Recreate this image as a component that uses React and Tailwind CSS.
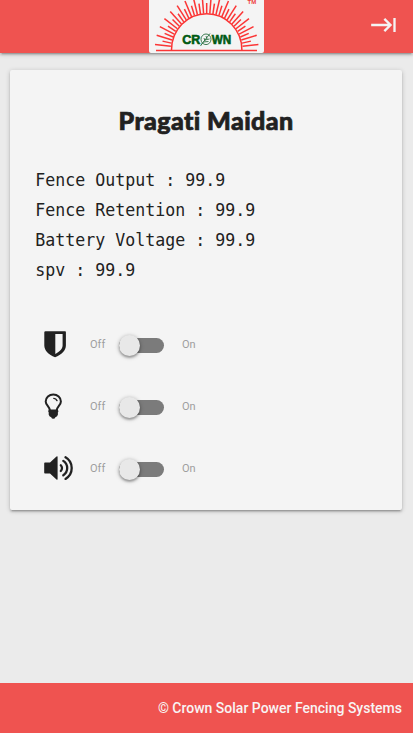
import { MdKeyboardTab } from "react-icons/md";

const readings = [
  ["Fence Output", "99.9"],
  ["Fence Retention", "99.9"],
  ["Battery Voltage", "99.9"],
  ["spv", "99.9"],
];

const rays = Array.from({ length: 35 }, (_, i) => {
  const angle = Math.PI * ((i + 1.2) / 36.4);
  const outer = i % 2 ? 45 : 52;
  return {
    x1: 57.7 - Math.cos(angle) * 36,
    y1: 50 - Math.sin(angle) * 36.5,
    x2: 57.7 - Math.cos(angle) * outer,
    y2: 50 - Math.sin(angle) * (outer + 2),
  };
});

function Logo() {
  return (
    <svg width="115" height="53" viewBox="0 0 115 53" className="block rounded-b-xs bg-[#f4f4f4]">
      <g stroke="#fb3535" strokeWidth="1.5" fill="none">
        {rays.map((r, i) => (
          <line key={i} {...r} />
        ))}
        <path d="M22.5 50 A35.2 36.3 0 0 1 92.9 50" />
        <path d="M7 50.4H108" />
      </g>
      <g
        fill="#005a12"
        stroke="#005a12"
        strokeWidth="0.6"
        fontFamily="'Liberation Sans', Arial, sans-serif"
        fontWeight="700"
        fontSize="13"
      >
        <text x="33.2" y="43.8" textLength="18" lengthAdjust="spacingAndGlyphs">CR</text>
        <text x="62.8" y="43.8" textLength="19.5" lengthAdjust="spacingAndGlyphs">WN</text>
      </g>
      <g fill="none" stroke="#2c7043" strokeWidth="0.9">
        <ellipse cx="57" cy="39.3" rx="5" ry="5.3" />
        <path d="M52.5 44.5 61 33.5M54 42l5.5-.5M55.5 40l5-1M55 38l1 3M57 36l1 3M51.5 46l2-3" />
      </g>
      <text x="98.6" y="4.2" fill="#ee3d3d" fontFamily="'Liberation Sans', Arial, sans-serif" fontSize="6" fontWeight="700">TM</text>
    </svg>
  );
}

function ShieldIcon() {
  return (
    <svg width="30" height="28" viewBox="0 0 30 28" fill="#212121">
      <path fillRule="evenodd" d="M1.500 1.200h19.600q.8 0 .8.8v13.400c0 5-4.300 9.200-10.800 11.900C4.500 24.600.3 20.400.3 15.400V2.200q0-1 1.200-1ZM11.300 4v19.900c4.600-2.300 7.300-5 7.300-8.600V4Z" />
    </svg>
  );
}

function BulbIcon() {
  return (
    <svg width="30" height="28" viewBox="0 -0.6 30 28" fill="none" stroke="#212121">
      <path strokeWidth="2" d="M6 18C5.500 13.900 1.700 12.600 1.700 8.800A7.600 6.900 0 0 1 16.900 8.800C16.900 12.600 13.100 13.900 12.600 18" />
      <path strokeWidth="1.400" strokeLinecap="round" d="M9.800 5.800q2.200.1 3.200 2.200" />
      <path fill="#212121" stroke="none" d="M4.700 16.800h9.200l.5 2-.6 1.300.2 1.600-.9 2-1.700.9q-.5 1.600-2.100 1.600t-2.100-1.600l-1.700-.9-.9-2 .2-1.600-.6-1.300Z" />
    </svg>
  );
}

function VolumeIcon() {
  return (
    <svg width="30" height="28" viewBox="0 0 30 28" fill="none" stroke="#212121">
      <path fill="#212121" stroke="none" d="M.2 9.300q0-.8.8-.8H6l6.500-6q1.100-.8 1.100.4v22.100q0 1.300-1.100.4l-6.500-5.900H1q-.8 0-.8-.8Z" />
      <g strokeWidth="2.300" strokeLinecap="round">
        <path d="M16.800 11.200a4.100 4.100 0 0 1 0 5.800" />
        <path d="M19.300 6.900a8.600 8.600 0 0 1 0 14.400" />
        <path d="M21.500 3.300a12.500 12.500 0 0 1 0 21.600" />
      </g>
    </svg>
  );
}

function SwitchRow({ icon }) {
  return (
    <div className="flex h-[62px] items-center pl-[34px] font-['Roboto',sans-serif] text-[11px] text-[#9e9e9e]">
      <div className="w-[46px]">{icon}</div>
      <span className="w-[29px] pt-0.5">Off</span>
      <button type="button" aria-label="Toggle" className="mt-[3px] mr-[18px] flex h-[15px] w-[45px] items-center rounded-full bg-[#7b7b7b]">
        <span className="block size-[21px] shrink-0 rounded-full bg-[#e8e8e8] shadow-[0_2px_2px_0_rgba(0,0,0,0.2),0_1px_4px_0_rgba(0,0,0,0.35)]" />
      </button>
      <span className="pt-0.5">On</span>
    </div>
  );
}

export default function App() {
  return (
    <div className="flex h-[733px] w-full flex-col overflow-hidden bg-[#ebebeb]">
      <header className="grid h-[53px] shrink-0 grid-cols-[149px_115px_1fr] bg-[#ef5350] shadow-[0_2px_2px_0_rgba(0,0,0,0.14),0_3px_1px_-2px_rgba(0,0,0,0.12),0_1px_5px_0_rgba(0,0,0,0.2)]">
        <div />
        <Logo />
        <button type="button" aria-label="Log out" className="flex items-center justify-end pr-[15px] pb-[3px] text-[#f4f4f4]">
          <MdKeyboardTab size={28} />
        </button>
      </header>

      <main className="flex-1 pt-[17px] pr-[11px] pl-[10px]">
        <section className="h-[440px] rounded-xs bg-[#f4f4f4] text-[#212121] shadow-[0_2px_2px_0_rgba(0,0,0,0.14),0_3px_1px_-2px_rgba(0,0,0,0.12),0_1px_5px_0_rgba(0,0,0,0.2)]">
          <h1 className="flex h-[95px] justify-center pt-8 font-['Lato',sans-serif] text-[25px] leading-9 font-black tracking-[0.4px] whitespace-nowrap [-webkit-text-stroke:0.7px_#212121]">
            Pragati Maidan
          </h1>
          <div className="ml-[9px] h-[148px] origin-left scale-x-[0.955] pl-[17px] font-['DejaVu_Sans_Mono',monospace] text-[17.400px] leading-[30px] whitespace-pre">
            {readings.map(([name, value]) => (
              <p key={name}>{name} : {value}</p>
            ))}
          </div>
          <SwitchRow icon={<ShieldIcon />} />
          <SwitchRow icon={<BulbIcon />} />
          <SwitchRow icon={<VolumeIcon />} />
        </section>
      </main>

      <footer className="flex h-[50px] shrink-0 items-center justify-end bg-[#ef5350] pr-[11px] font-['Roboto',sans-serif] text-[14px] font-medium text-[#f8f4f4]">
        © Crown Solar Power Fencing Systems
      </footer>
    </div>
  );
}
